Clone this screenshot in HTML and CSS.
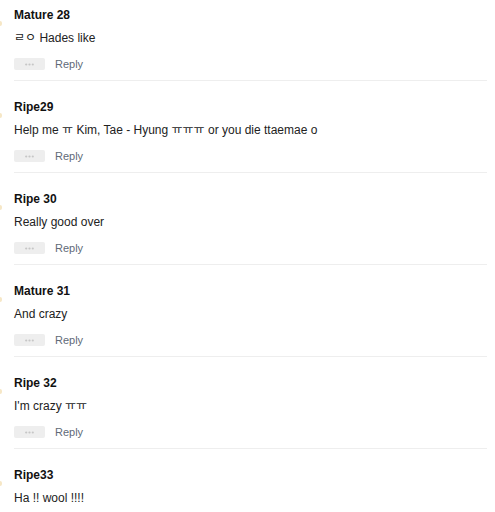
FILE: index.html
```html
<!DOCTYPE html>
<html lang="ko">
<head>
<meta charset="utf-8">
<link rel="stylesheet" href="styles.css">
</head>
<body>
<div class="list">
  <div class="item">
    <div class="mark"><span class="dot"></span></div>
    <div class="main">
      <div class="name">Mature 28</div>
      <div class="text">ㄹㅇ Hades like</div>
      <div class="actions"><span class="more"><svg width="9" height="3" viewBox="0 0 9 3"><circle cx="1.2" cy="1.5" r="1.1"/><circle cx="4.5" cy="1.5" r="1.1"/><circle cx="7.8" cy="1.5" r="1.1"/></svg></span><span class="reply">Reply</span></div>
    </div>
  </div>
  <div class="item">
    <div class="mark"><span class="dot"></span></div>
    <div class="main">
      <div class="name">Ripe29</div>
      <div class="text">Help me ㅠ Kim, Tae - Hyung ㅠㅠㅠ or you die ttaemae o</div>
      <div class="actions"><span class="more"><svg width="9" height="3" viewBox="0 0 9 3"><circle cx="1.2" cy="1.5" r="1.1"/><circle cx="4.5" cy="1.5" r="1.1"/><circle cx="7.8" cy="1.5" r="1.1"/></svg></span><span class="reply">Reply</span></div>
    </div>
  </div>
  <div class="item">
    <div class="mark"><span class="dot"></span></div>
    <div class="main">
      <div class="name">Ripe 30</div>
      <div class="text">Really good over</div>
      <div class="actions"><span class="more"><svg width="9" height="3" viewBox="0 0 9 3"><circle cx="1.2" cy="1.5" r="1.1"/><circle cx="4.5" cy="1.5" r="1.1"/><circle cx="7.8" cy="1.5" r="1.1"/></svg></span><span class="reply">Reply</span></div>
    </div>
  </div>
  <div class="item">
    <div class="mark"><span class="dot"></span></div>
    <div class="main">
      <div class="name">Mature 31</div>
      <div class="text">And crazy</div>
      <div class="actions"><span class="more"><svg width="9" height="3" viewBox="0 0 9 3"><circle cx="1.2" cy="1.5" r="1.1"/><circle cx="4.5" cy="1.5" r="1.1"/><circle cx="7.8" cy="1.5" r="1.1"/></svg></span><span class="reply">Reply</span></div>
    </div>
  </div>
  <div class="item">
    <div class="mark"><span class="dot"></span></div>
    <div class="main">
      <div class="name">Ripe 32</div>
      <div class="text">I'm crazy ㅠㅠ</div>
      <div class="actions"><span class="more"><svg width="9" height="3" viewBox="0 0 9 3"><circle cx="1.2" cy="1.5" r="1.1"/><circle cx="4.5" cy="1.5" r="1.1"/><circle cx="7.8" cy="1.5" r="1.1"/></svg></span><span class="reply">Reply</span></div>
    </div>
  </div>
  <div class="item">
    <div class="mark"><span class="dot"></span></div>
    <div class="main last">
      <div class="name">Ripe33</div>
      <div class="text">Ha !! wool !!!!</div>
    </div>
  </div>
</div>
</body>
</html>
```
FILE: styles.css
```css
html, body {
  margin: 0;
  padding: 0;
  background: #fff;
}
body {
  font-family: "Liberation Sans", Arial, "Noto Sans CJK KR", sans-serif;
  font-size: 12px;
  color: #222;
  overflow: hidden;
}
.list {
  margin-top: -11px;
  padding-right: 8px;
}
.item {
  display: grid;
  grid-template-columns: 14px 1fr;
}
.mark {
  padding-top: 32px;
}
.dot {
  display: block;
  width: 2px;
  height: 5px;
  background: #f6e7c6;
  border-radius: 0 2px 2px 0;
}
.main {
  padding: 18px 0 10px;
  border-bottom: 1px solid #eeeeee;
}
.main.last {
  border-bottom: 0;
}
.name {
  font-weight: bold;
  line-height: 16px;
  color: #111;
}
.text {
  margin-top: 7px;
  line-height: 16px;
  color: #222;
}
.actions {
  margin-top: 12px;
  display: flex;
  align-items: center;
  height: 12px;
  gap: 10px;
}
.more {
  width: 31px;
  height: 12px;
  background: #eeeeee;
  border-radius: 2px;
  display: flex;
  align-items: center;
  justify-content: center;
}
.more svg {
  display: block;
  fill: #c6c6c6;
}
.reply {
  font-size: 11px;
  color: #5f6a78;
  line-height: 12px;
}
```
